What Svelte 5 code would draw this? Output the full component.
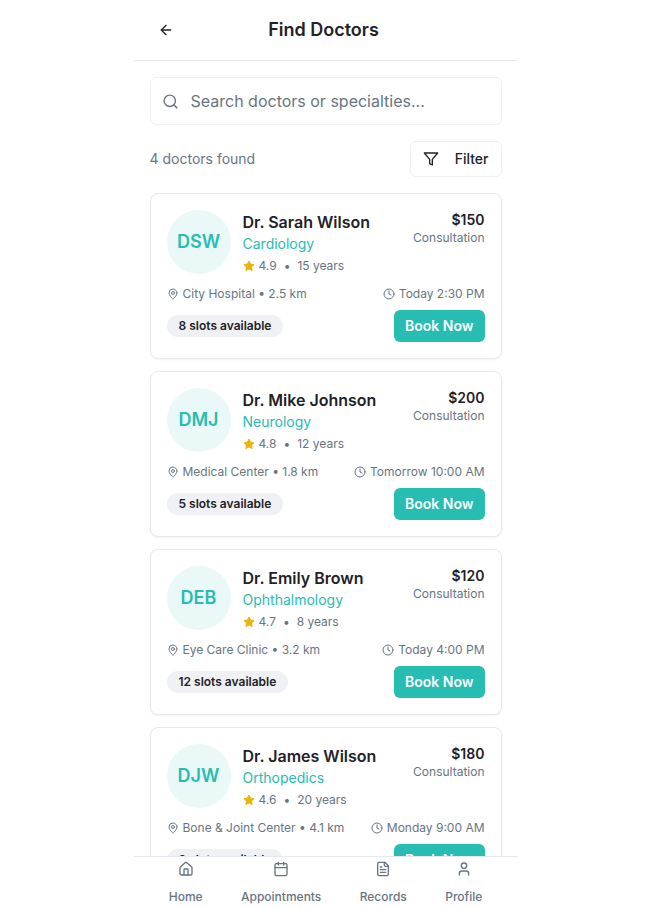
<script lang="ts">
  let query = $state('');

  const doctors = [
    { name: 'Dr. Sarah Wilson', initials: 'DSW', specialty: 'Cardiology', rating: '4.9', years: 15, price: 150, place: 'City Hospital', distance: '2.5 km', next: 'Today 2:30 PM', slots: 8 },
    { name: 'Dr. Mike Johnson', initials: 'DMJ', specialty: 'Neurology', rating: '4.8', years: 12, price: 200, place: 'Medical Center', distance: '1.8 km', next: 'Tomorrow 10:00 AM', slots: 5 },
    { name: 'Dr. Emily Brown', initials: 'DEB', specialty: 'Ophthalmology', rating: '4.7', years: 8, price: 120, place: 'Eye Care Clinic', distance: '3.2 km', next: 'Today 4:00 PM', slots: 12 },
    { name: 'Dr. James Wilson', initials: 'DJW', specialty: 'Orthopedics', rating: '4.6', years: 20, price: 180, place: 'Bone & Joint Center', distance: '4.1 km', next: 'Monday 9:00 AM', slots: 3 }
  ];

  const tabs = ['Home', 'Appointments', 'Records', 'Profile'];

  /* match on either the name or the specialty */
  const found = $derived(
    doctors.filter((d) => (d.name + ' ' + d.specialty).toLowerCase().includes(query.toLowerCase()))
  );
</script>

<div class="screen">
  <header class="top">
    <button class="back" type="button" aria-label="Back">
      <svg class="icon" viewBox="0 0 24 24"><path d="m12 19-7-7 7-7" /><path d="M19 12H5" /></svg>
    </button>
    <h1>Find Doctors</h1>
    <span class="spacer"></span>
  </header>

  <main>
    <label class="search">
      <svg class="icon lens" viewBox="0 0 24 24"><circle cx="11" cy="11" r="8" /><path d="m21 21-4.3-4.3" /></svg>
      <input type="text" aria-label="Search doctors or specialties" placeholder="Search doctors or specialties..." bind:value={query} />
    </label>

    <div class="summary">
      <p>{found.length} doctors found</p>
      <button class="filter" type="button">
        <svg class="icon" viewBox="0 0 24 24"><path d="M22 3H2l8 9.46V19l4 2v-8.54L22 3z" /></svg>
        Filter
      </button>
    </div>

    <div class="list">
      {#each found as doctor}
        <article class="card">
          <div class="intro">
            <div class="avatar" aria-hidden="true">{doctor.initials}</div>
            <div class="who">
              <h2>{doctor.name}</h2>
              <p class="specialty">{doctor.specialty}</p>
              <p class="rating">
                <svg class="star" viewBox="0 0 24 24"><path d="M12 2l3.09 6.26L22 9.27l-5 4.87 1.18 6.88L12 17.77l-6.18 3.25L7 14.14 2 9.27l6.91-1.01L12 2z" /></svg>
                <span>{doctor.rating}</span>
                <span class="dot">•</span>
                <span>{doctor.years} years</span>
              </p>
            </div>
            <div class="fee">
              <p class="price">${doctor.price}</p>
              <p>Consultation</p>
            </div>
          </div>

          <div class="row meta">
            <span class="fact">
              <svg class="icon small" viewBox="0 0 24 24"><path d="M20 10c0 4.993-5.539 10.193-7.399 11.799a1 1 0 0 1-1.202 0C9.539 20.193 4 14.993 4 10a8 8 0 0 1 16 0" /><circle cx="12" cy="10" r="3" /></svg>
              {doctor.place} • {doctor.distance}
            </span>
            <span class="fact">
              <svg class="icon small" viewBox="0 0 24 24"><circle cx="12" cy="12" r="10" /><path d="M12 6v6l4 2" /></svg>
              {doctor.next}
            </span>
          </div>

          <div class="row booking">
            <span class="badge">{doctor.slots} slots available</span>
            <button class="book" type="button">Book Now</button>
          </div>
        </article>
      {/each}
    </div>
  </main>

  <nav class="tabs" aria-label="Main">
    {#each tabs as tab}
      <a href="#{tab.toLowerCase()}">
        <svg class="icon" viewBox="0 0 24 24">
          {#if tab === 'Home'}
            <path d="M15 21v-8a1 1 0 0 0-1-1h-4a1 1 0 0 0-1 1v8" />
            <path d="M3 10a2 2 0 0 1 .709-1.528l7-5.999a2 2 0 0 1 2.582 0l7 5.999A2 2 0 0 1 21 10v9a2 2 0 0 1-2 2H5a2 2 0 0 1-2-2z" />
          {:else if tab === 'Appointments'}
            <path d="M8 2v4M16 2v4M3 10h18" />
            <rect width="18" height="18" x="3" y="4" rx="2" />
          {:else if tab === 'Records'}
            <path d="M15 2H6a2 2 0 0 0-2 2v16a2 2 0 0 0 2 2h12a2 2 0 0 0 2-2V7Z" />
            <path d="M14 2v4a2 2 0 0 0 2 2h4M10 9H8M16 13H8M16 17H8" />
          {:else}
            <path d="M19 21v-2a4 4 0 0 0-4-4H9a4 4 0 0 0-4 4v2" />
            <circle cx="12" cy="7" r="4" />
          {/if}
        </svg>
        {tab}
      </a>
    {/each}
  </nav>
</div>

<style>
  :global(body) {
    margin: 0;
    background: #fff;
  }

  .screen {
    --ink: #1f2228;
    --muted: #677583;
    --teal: #27bdb2;
    --line: #e5e8ec;
    --line-soft: #eef0f3;
    display: flex;
    flex-direction: column;
    max-width: 384px;
    height: 100vh;
    margin: 0 auto;
    color: var(--ink);
    font-family: Inter, 'Liberation Sans', sans-serif;
    font-size: 14px;
    line-height: 20px;
  }

  h1,
  h2,
  p {
    margin: 0;
  }

  button,
  input {
    font: inherit;
    color: inherit;
  }

  button {
    padding: 0;
    border: 0;
    background: none;
    cursor: pointer;
  }

  .icon {
    flex: none;
    width: 16px;
    height: 16px;
    fill: none;
    stroke: currentColor;
    stroke-width: 2;
    stroke-linecap: round;
    stroke-linejoin: round;
  }

  .icon.small,
  .star {
    width: 12px;
    height: 12px;
  }

  /* Header */
  .top {
    display: flex;
    align-items: center;
    justify-content: space-between;
    padding: 14px 16px;
    border-bottom: 1px solid var(--line);
  }

  .back {
    display: grid;
    place-items: center;
    width: 32px;
    height: 32px;
  }

  .spacer {
    width: 36px;
  }

  h1 {
    font-size: 18px;
    line-height: 28px;
    font-weight: 600;
  }

  /* Scrolling content */
  main {
    flex: 1;
    min-height: 0;
    overflow-y: auto;
    scrollbar-width: none;
    padding: 16px;
  }

  .search {
    display: flex;
    align-items: center;
    gap: 12px;
    height: 46px;
    padding: 0 11px;
    border: 1px solid var(--line-soft);
    border-radius: 6px;
    color: var(--muted);
  }

  .lens {
    width: 17px;
    height: 17px;
  }

  .search input {
    flex: 1;
    min-width: 0;
    padding: 0;
    border: 0;
    outline: 0;
    background: none;
    color: var(--ink);
    font-size: 16px;
    line-height: 24px;
  }

  .search input::placeholder {
    color: var(--muted);
    opacity: 1;
  }

  .summary {
    display: flex;
    align-items: center;
    justify-content: space-between;
    margin: 16px 0;
    color: var(--muted);
  }

  .filter {
    display: flex;
    align-items: center;
    gap: 16px;
    height: 36px;
    padding: 0 12px;
    border: 1px solid var(--line-soft);
    border-radius: 6px;
    color: var(--ink);
    font-weight: 500;
  }

  .list {
    display: grid;
    gap: 12px;
  }

  .card {
    padding: 16px;
    border: 1px solid var(--line);
    border-radius: 8px;
    background: #fff;
    box-shadow: 0 1px 2px rgb(0 0 0 / 0.05);
    color: var(--muted);
    font-size: 12px;
    line-height: 16px;
  }

  .intro {
    display: flex;
    gap: 12px;
  }

  .avatar {
    display: grid;
    place-items: center;
    flex: none;
    width: 64px;
    height: 64px;
    border-radius: 50%;
    background: #ebf8f8;
    color: var(--teal);
    font-size: 18px;
    font-weight: 600;
  }

  .who {
    flex: 1;
    min-width: 0;
  }

  h2 {
    color: var(--ink);
    font-size: 16px;
    line-height: 24px;
    font-weight: 600;
  }

  .specialty {
    color: var(--teal);
    font-size: 14px;
    line-height: 20px;
  }

  .rating {
    display: flex;
    align-items: center;
    gap: 4px;
    margin-top: 4px;
  }

  .star {
    fill: #eab308;
    stroke: #eab308;
    stroke-width: 2;
    stroke-linejoin: round;
  }

  .dot {
    margin: 0 3px;
  }

  .fee {
    text-align: right;
  }

  .price {
    color: var(--ink);
    font-size: 14px;
    line-height: 20px;
    font-weight: 600;
  }

  .row {
    display: flex;
    align-items: center;
    justify-content: space-between;
  }

  .meta {
    margin-top: 12px;
  }

  .fact {
    display: flex;
    align-items: center;
    gap: 4px;
  }

  .booking {
    margin-top: 8px;
  }

  .badge {
    padding: 3px 12px;
    border-radius: 11px;
    background: #f0f1f5;
    color: var(--ink);
    font-weight: 600;
  }

  .book {
    height: 32px;
    padding: 0 11px;
    border-radius: 6px;
    background: var(--teal);
    color: #fff;
    font-size: 14px;
    font-weight: 600;
  }

  /* Bottom navigation */
  .tabs {
    display: flex;
    justify-content: space-around;
    padding: 4px 16px;
    border-top: 1px solid var(--line);
    background: #fff;
  }

  .tabs a {
    display: flex;
    flex-direction: column;
    align-items: center;
    gap: 12px;
    padding: 0 12px;
    color: var(--muted);
    font-size: 12px;
    line-height: 16px;
    font-weight: 500;
    text-decoration: none;
  }
</style>
